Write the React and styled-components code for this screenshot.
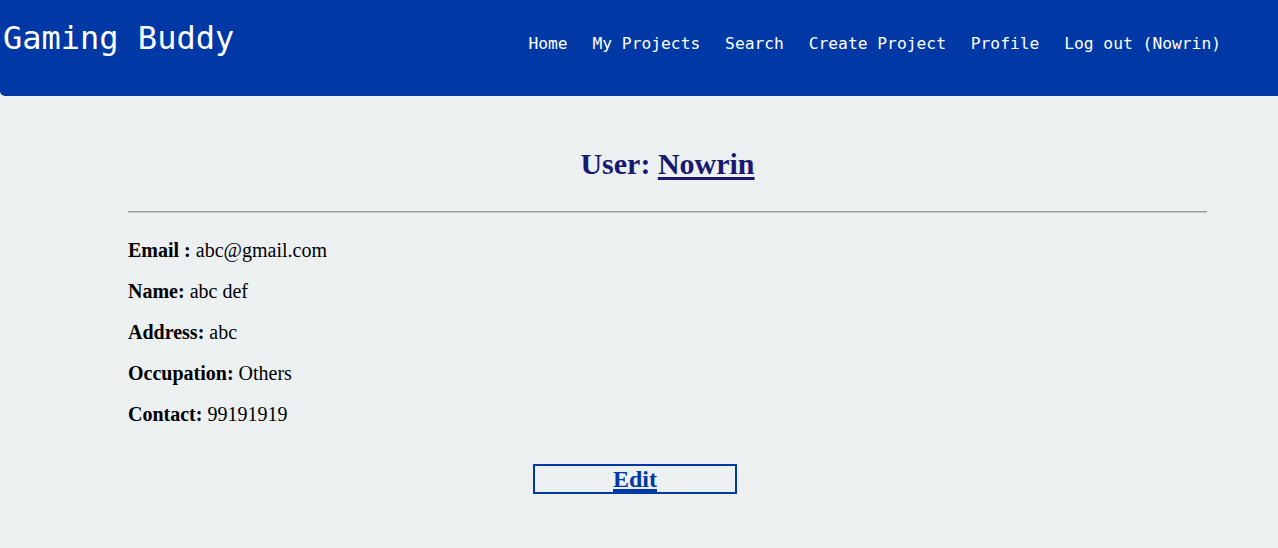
import React from 'react'
import styled, {createGlobalStyle} from 'styled-components'

const GlobalStyle = createGlobalStyle`
    html, body {
        margin: 0;
        padding: 0;
        background: #ecf0f1;
    }
`

const Page = styled.div`
    min-height: 100vh;
    background: #ecf0f1;
    font-family: 'Liberation Serif', 'Times New Roman', serif;
`

const Header = styled.header`
    display: flex;
    justify-content: space-between;
    align-items: flex-start;
    height: 96px;
    background: #0039a6;
    border-bottom-left-radius: 5px;
    box-sizing: border-box;
    padding: 18px 57px 0 3px;
`

const Logo = styled.a`
    font-family: 'DejaVu Sans Mono', 'Liberation Mono', monospace;
    font-size: 32px;
    color: #fff;
    text-decoration: none;
    line-height: 40px;
`

const Nav = styled.nav`
    display: flex;
    gap: 24.8px;
    margin-top: 15px;
`

const NavLink = styled.a`
    font-family: 'DejaVu Sans Mono', 'Liberation Mono', monospace;
    font-size: 16.3px;
    color: #fff;
    text-decoration: none;
    line-height: 22px;
`

const Content = styled.main`
    margin: 0 71px 0 128px;
    padding-top: 50px;
`

const Title = styled.h2`
    margin: 0;
    text-align: center;
    font-size: 30px;
    font-weight: bold;
    color: #191970;
    line-height: 36px;
`

const TitleLink = styled.a`
    color: #191970;
    text-decoration: underline;
    text-decoration-thickness: 3px;
    text-underline-offset: 3px;
`

const Divider = styled.hr`
    margin: 29px 0 0;
    border: none;
    border-top: 1px solid #9a9a9a;
    border-bottom: 1px solid #c8cbcc;
`

const Details = styled.div`
    padding-top: 26px;
`

const Field = styled.p`
    margin: 0 0 18px;
    font-size: 20px;
    line-height: 23px;
    color: #000;
`

const Actions = styled.div`
    padding: 20px 0 0 405px;
`

const EditButton = styled.div`
    width: 204px;
    height: 30px;
    box-sizing: border-box;
    border: 2px solid #0039a6;
    display: flex;
    justify-content: center;
    align-items: center;
`

const EditLink = styled.a`
    font-size: 24px;
    font-weight: bold;
    color: #0039a6;
    text-decoration: underline;
    text-decoration-thickness: 3px;
    text-underline-offset: 2px;
    line-height: 26px;
`

const fields = [
    ['Email :', 'abc@gmail.com'],
    ['Name:', 'abc def'],
    ['Address:', 'abc'],
    ['Occupation:', 'Others'],
    ['Contact:', '99191919'],
]

export default function App() {
    return (
        <Page>
            <GlobalStyle />
            <Header>
                <Logo href="#">Gaming Buddy</Logo>
                <Nav>
                    <NavLink href="#">Home</NavLink>
                    <NavLink href="#">My Projects</NavLink>
                    <NavLink href="#">Search</NavLink>
                    <NavLink href="#">Create Project</NavLink>
                    <NavLink href="#">Profile</NavLink>
                    <NavLink href="#">Log out (Nowrin)</NavLink>
                </Nav>
            </Header>

            <Content>
                <Title>
                    User: <TitleLink href="#">Nowrin</TitleLink>
                </Title>
                <Divider />

                <Details>
                    {fields.map(([label, value]) => (
                        <Field key={label}>
                            <b>{label}</b> {value}
                        </Field>
                    ))}
                </Details>

                <Actions>
                    <EditButton>
                        <EditLink href="#">Edit</EditLink>
                    </EditButton>
                </Actions>
            </Content>
        </Page>
    )
}
